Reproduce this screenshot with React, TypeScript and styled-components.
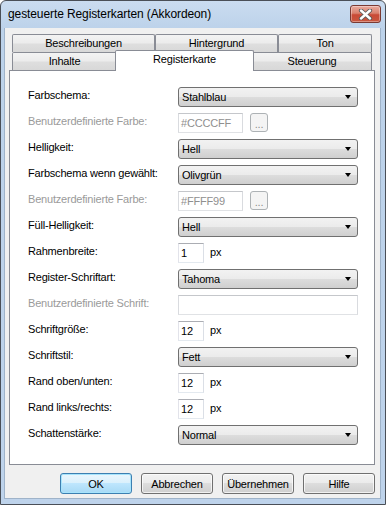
import React from 'react'
import styled, { createGlobalStyle, css } from 'styled-components'

const GlobalStyle = createGlobalStyle`
  html, body {
    margin: 0;
    padding: 0;
    background: #ffffff;
  }
  * {
    box-sizing: border-box;
  }
`

type Row =
  | { kind: 'combo'; label: string; value: string }
  | { kind: 'color'; label: string; value: string }
  | { kind: 'number'; label: string; value: string }
  | { kind: 'text'; label: string }

const rows: Row[] = [
  { kind: 'combo', label: 'Farbschema:', value: 'Stahlblau' },
  { kind: 'color', label: 'Benutzerdefinierte Farbe:', value: '#CCCCFF' },
  { kind: 'combo', label: 'Helligkeit:', value: 'Hell' },
  { kind: 'combo', label: 'Farbschema wenn gewählt:', value: 'Olivgrün' },
  { kind: 'color', label: 'Benutzerdefinierte Farbe:', value: '#FFFF99' },
  { kind: 'combo', label: 'Füll-Helligkeit:', value: 'Hell' },
  { kind: 'number', label: 'Rahmenbreite:', value: '1' },
  { kind: 'combo', label: 'Register-Schriftart:', value: 'Tahoma' },
  { kind: 'text', label: 'Benutzerdefinierte Schrift:' },
  { kind: 'number', label: 'Schriftgröße:', value: '12' },
  { kind: 'combo', label: 'Schriftstil:', value: 'Fett' },
  { kind: 'number', label: 'Rand oben/unten:', value: '12' },
  { kind: 'number', label: 'Rand links/rechts:', value: '12' },
  { kind: 'combo', label: 'Schattenstärke:', value: 'Normal' },
]

export default function App() {
  return (
    <>
      <GlobalStyle />
      <Window>
        <TitleBar>
          <Title>gesteuerte Registerkarten (Akkordeon)</Title>
          <CloseButton>
            <svg width="15" height="11" viewBox="0 0 15 11">
              <path d="M3 1.5 L12 9.5 M12 1.5 L3 9.5" stroke="#5a5a5a" strokeWidth="4.2" strokeLinecap="round" />
              <path d="M3 1.5 L12 9.5 M12 1.5 L3 9.5" stroke="#ffffff" strokeWidth="2.4" strokeLinecap="round" />
            </svg>
          </CloseButton>
        </TitleBar>

        <Client>
          <TabStrip>
            <TabRow>
              <Tab $width={143}>Beschreibungen</Tab>
              <Tab $width={123}>Hintergrund</Tab>
              <Tab $width={94}>Ton</Tab>
            </TabRow>
            <TabRow>
              <Tab $width={105}>Inhalte</Tab>
              <Tab $width={135} $active>Registerkarte</Tab>
              <Tab $width={120}>Steuerung</Tab>
            </TabRow>
          </TabStrip>

          <Panel>
            <Form>
              {rows.map((row, i) => {
                const disabled = row.kind === 'color' || row.kind === 'text'
                return (
                  <React.Fragment key={i}>
                    <Label $disabled={disabled}>{row.label}</Label>
                    {row.kind === 'combo' && (
                      <Combo>
                        <span>{row.value}</span>
                        <Arrow />
                      </Combo>
                    )}
                    {row.kind === 'color' && (
                      <Field>
                        <TextBox $width={65} $disabled>{row.value}</TextBox>
                        <DotsButton>...</DotsButton>
                      </Field>
                    )}
                    {row.kind === 'number' && (
                      <Field>
                        <TextBox $width={26}>{row.value}</TextBox>
                        <Unit>px</Unit>
                      </Field>
                    )}
                    {row.kind === 'text' && <TextBox $width={180} $disabled />}
                  </React.Fragment>
                )
              })}
            </Form>
          </Panel>

          <ButtonRow>
            <Button $default>OK</Button>
            <Button>Abbrechen</Button>
            <Button>Übernehmen</Button>
            <Button>Hilfe</Button>
          </ButtonRow>
        </Client>
      </Window>
    </>
  )
}

const uiFont = css`
  font-family: "Liberation Sans", Arial, sans-serif;
  font-size: 11px;
  letter-spacing: -0.2px;
  color: #000;
`

const Window = styled.div`
  width: 386px;
  height: 505px;
  display: flex;
  flex-direction: column;
  border: 1px solid #4a4f57;
  border-radius: 6px 6px 0 0;
  background: linear-gradient(to bottom, #cadcf0 0px, #bcd2ea 28px, #bed3eb 100%);
  overflow: hidden;
`

const TitleBar = styled.div`
  height: 27px;
  flex: none;
  display: flex;
  align-items: flex-start;
  justify-content: space-between;
  padding: 0 4px 0 7px;
`

const Title = styled.div`
  font-family: "Liberation Sans", Arial, sans-serif;
  font-size: 12px;
  letter-spacing: -0.1px;
  color: #000;
  line-height: 14px;
  margin-top: 6px;
`

const CloseButton = styled.div`
  width: 31px;
  height: 18px;
  margin-top: 4px;
  display: flex;
  align-items: center;
  justify-content: center;
  border: 1px solid #7a3a33;
  border-radius: 3px;
  background: linear-gradient(to bottom, #e9aa9e 0%, #d9826f 45%, #c94a36 55%, #c8573f 100%);
  box-shadow: inset 0 0 0 1px rgba(255, 255, 255, 0.35);
`

const Client = styled.div`
  flex: 1;
  display: flex;
  flex-direction: column;
  margin: 0 4px 5px 3px;
  padding: 6px 5px 4px 4px;
  background: #f0f0f0;
  border: 1px solid #9fb3c9;
  border-top: none;
`

const TabStrip = styled.div`
  display: flex;
  flex-direction: column;
  margin: 0 2px 0 3px;
`

const TabRow = styled.div`
  display: flex;
  align-items: flex-start;
  height: 18px;
`

const Tab = styled.div<{ $width: number; $active?: boolean }>`
  ${uiFont};
  flex: none;
  width: ${(p) => p.$width}px;
  height: 18px;
  display: flex;
  align-items: center;
  justify-content: center;
  padding-bottom: 1px;
  border: 1px solid #898c95;
  border-bottom: none;
  border-radius: 2px 2px 0 0;
  background: linear-gradient(to bottom, #f3f3f3 0%, #ececec 45%, #dedede 55%, #d8d8d8 100%);

  ${(p) =>
    p.$active &&
    css`
      position: relative;
      z-index: 1;
      width: ${p.$width + 4}px;
      height: 21px;
      margin: -2px -2px 0;
      padding-bottom: 4px;
      background: #ffffff;
    `}
`

const Panel = styled.div`
  flex: 1;
  background: #ffffff;
  border: 1px solid #898c95;
  padding: 16px 16px 0 18px;
`

const Form = styled.div`
  display: grid;
  grid-template-columns: 150px 180px;
  grid-auto-rows: 20px;
  row-gap: 6px;
`

const Label = styled.div<{ $disabled?: boolean }>`
  ${uiFont};
  align-self: center;
  line-height: 13px;
  padding-bottom: 3px;
  white-space: nowrap;
  color: ${(p) => (p.$disabled ? '#9a9a9a' : '#000')};
`

const Combo = styled.div`
  ${uiFont};
  height: 20px;
  display: flex;
  align-items: center;
  justify-content: space-between;
  padding: 0 6px 0 3px;
  border: 1px solid #707070;
  border-radius: 3px;
  background: linear-gradient(to bottom, #f2f2f2 0%, #ebebeb 50%, #dddddd 50%, #cfcfcf 100%);
`

const Arrow = styled.span`
  width: 0;
  height: 0;
  border-left: 3.5px solid transparent;
  border-right: 3.5px solid transparent;
  border-top: 4px solid #000;
`

const Field = styled.div`
  display: flex;
  align-items: center;
  height: 20px;
`

const TextBox = styled.div<{ $width: number; $disabled?: boolean }>`
  ${uiFont};
  width: ${(p) => p.$width}px;
  height: 20px;
  display: flex;
  align-items: center;
  padding: 0 2px;
  background: #ffffff;
  border: 1px solid;
  border-color: #abadb3 #dbdfe6 #e3e9ef #e2e3ea;
  color: ${(p) => (p.$disabled ? '#8f8f8f' : '#000')};
  ${(p) =>
    p.$disabled &&
    css`
      border-color: #c5c7cb #d9dbdf #e0e2e5 #d9dbdf;
    `}
`

const DotsButton = styled.div`
  ${uiFont};
  width: 18px;
  height: 19px;
  margin-left: 7px;
  align-self: flex-start;
  display: flex;
  align-items: flex-end;
  justify-content: center;
  padding-bottom: 3px;
  line-height: 8px;
  color: #8d8d8d;
  border: 1px solid #adb2b5;
  border-radius: 3px;
  background: #f4f4f4;
`

const Unit = styled.span`
  ${uiFont};
  margin-left: 6px;
  padding-bottom: 3px;
`

const ButtonRow = styled.div`
  display: flex;
  justify-content: flex-end;
  gap: 9px;
  margin-top: 8px;
`

const Button = styled.div<{ $default?: boolean }>`
  ${uiFont};
  width: 72px;
  height: 21px;
  display: flex;
  align-items: center;
  justify-content: center;
  border: 1px solid #707070;
  border-radius: 3px;
  background: linear-gradient(to bottom, #f2f2f2 0%, #ebebeb 50%, #dddddd 50%, #cfcfcf 100%);
  box-shadow: inset 0 0 0 1px rgba(255, 255, 255, 0.7);

  ${(p) =>
    p.$default &&
    css`
      border-color: #3c7fb1;
      background: linear-gradient(to bottom, #eaf6fd 0%, #d9f0fc 50%, #bee6fd 50%, #a7d9f5 100%);
      box-shadow: inset 0 0 0 1px #a7e4fc;
    `}
`
